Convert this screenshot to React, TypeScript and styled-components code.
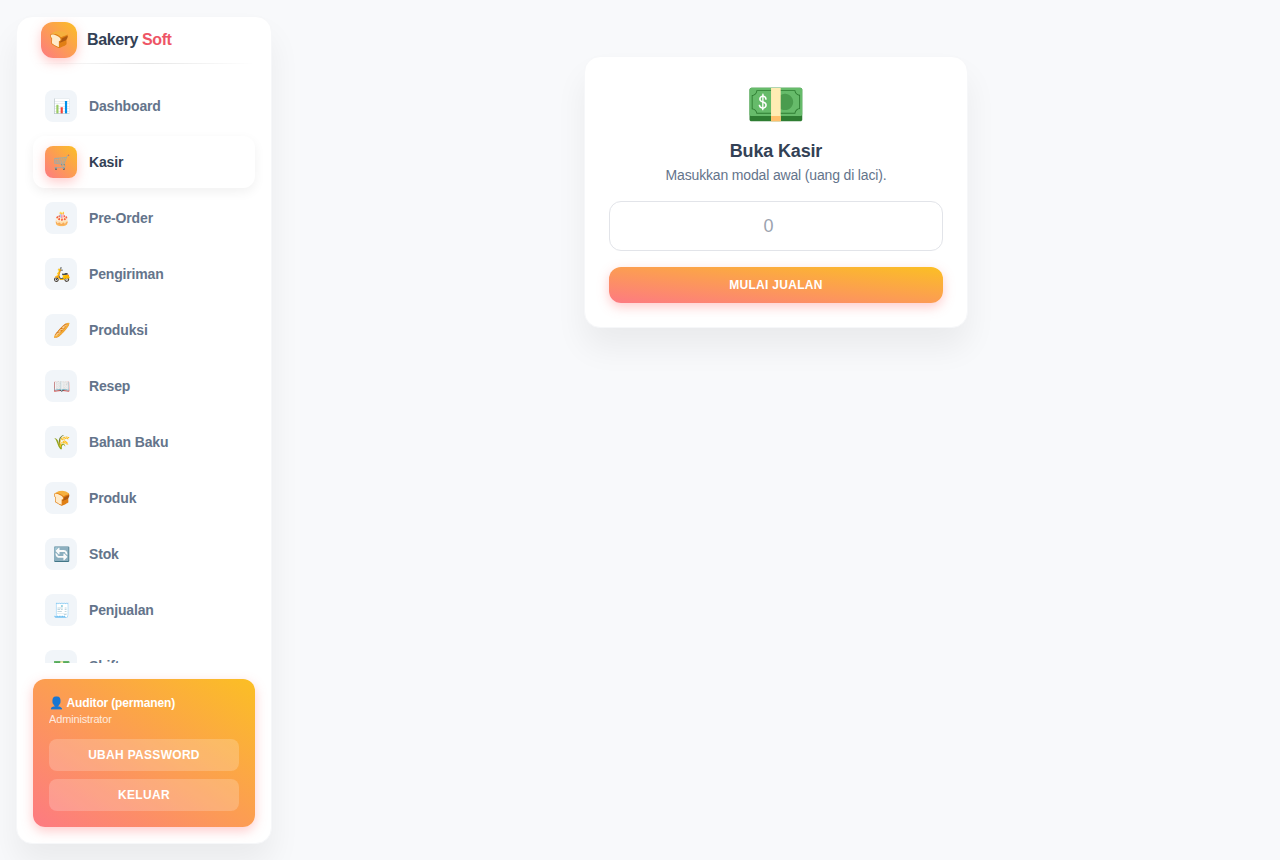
import React from "react";
import styled, { createGlobalStyle, css } from "styled-components";

const sunset = "linear-gradient(to top right, #fd7a82, #fbbf24)";
const glow = "0 4px 12px rgba(255, 107, 107, 0.35)";

const GlobalStyle = createGlobalStyle`
  *, *::before, *::after { box-sizing: border-box; }
  body {
    margin: 0;
    background: #f8f9fb;
    color: #334155;
    font-family: "Liberation Sans", Arial, sans-serif;
    font-size: 16px;
    line-height: 20px;
    letter-spacing: -0.01em;
  }
  h1, p, ul { margin: 0; padding: 0; }
  button, input { font-family: inherit; }
`;

const Page = styled.div`
  display: flex;
  height: 100vh;
  gap: 16px;
  padding: 16px;
  overflow: hidden;
  font-size: 14px;
`;

const panel = css`
  background: #fff;
  border: 1px solid #f6f7f9;
  border-radius: 16px;
  box-shadow: 0 20px 32px 0 rgba(0, 0, 0, 0.06);
`;

const Sidebar = styled.aside`
  ${panel}
  display: flex;
  flex-direction: column;
  flex: 0 0 256px;
  min-height: 0;
  overflow: hidden;
`;

const Brand = styled.a`
  display: flex;
  align-items: center;
  gap: 10px;
  height: 46px;
  flex-shrink: 0;
  padding: 0 24px;
  color: #334155;
  font-size: 16px;
  font-weight: 700;
  letter-spacing: -0.025em;
  text-decoration: none;
`;

const BrandMark = styled.span`
  display: grid;
  place-items: center;
  width: 36px;
  height: 36px;
  border-radius: 12px;
  background: ${sunset};
  box-shadow: ${glow};
`;

const Accent = styled.span`
  color: #ee5566;
`;

const Divider = styled.hr`
  flex-shrink: 0;
  height: 1px;
  margin: 0 16px;
  border: 0;
  background: linear-gradient(to right, transparent, rgba(0, 0, 0, 0.1), transparent);
`;

const Nav = styled.nav`
  flex: 1;
  min-height: 0;
  overflow: hidden;
  padding: 16px 16px 0;
`;

const NavList = styled.ul`
  display: flex;
  flex-direction: column;
  gap: 4px;
  list-style: none;
`;

const NavLink = styled.a<{ $active: boolean }>`
  display: flex;
  align-items: center;
  gap: 12px;
  padding: 10px 12px;
  border-radius: 12px;
  color: ${(p) => (p.$active ? "#334155" : "#64748b")};
  font-weight: 700;
  text-decoration: none;
  box-shadow: ${(p) => (p.$active ? "0 4px 12px rgba(0, 0, 0, 0.06)" : "none")};
`;

const NavIcon = styled.span<{ $active: boolean }>`
  display: grid;
  place-items: center;
  width: 32px;
  height: 32px;
  border-radius: 8px;
  font-weight: 400;
  letter-spacing: normal;
  background: ${(p) => (p.$active ? sunset : "#f1f5f9")};
  box-shadow: ${(p) => (p.$active ? glow : "none")};
`;

const Account = styled.section`
  flex-shrink: 0;
  display: flex;
  flex-direction: column;
  gap: 8px;
  margin: 16px;
  padding: 16px;
  border-radius: 12px;
  background: ${sunset};
  box-shadow: ${glow};
  color: #fff;
`;

const Identity = styled.div`
  padding-bottom: 4px;
`;

const UserName = styled.p`
  font-size: 12px;
  font-weight: 700;
  line-height: 16px;
`;

const UserRole = styled.p`
  font-size: 11px;
  line-height: 16px;
  opacity: 0.8;
`;

const Button = styled.button`
  width: 100%;
  border: 0;
  color: #fff;
  font-size: 12px;
  font-weight: 700;
  line-height: 16px;
  letter-spacing: 0.025em;
  text-transform: uppercase;
  cursor: pointer;
`;

const GhostButton = styled(Button)`
  padding: 8px 12px;
  border-radius: 8px;
  background: rgba(255, 255, 255, 0.2);
`;

const PrimaryButton = styled(Button)`
  padding: 10px 16px;
  border-radius: 12px;
  background: ${sunset};
  box-shadow: ${glow};
`;

const Main = styled.main`
  flex: 1;
  min-width: 0;
  display: flex;
  align-items: flex-start;
  justify-content: center;
  padding-top: 40px;
`;

const Card = styled.form`
  ${panel}
  width: 100%;
  max-width: 384px;
  padding: 24px;
  text-align: center;
`;

const Cash = styled.div`
  margin-bottom: 8px;
  font-size: 48px;
  line-height: 48px;
`;

const Title = styled.h1`
  font-size: 18px;
  font-weight: 700;
  line-height: 28px;
`;

const Hint = styled.label`
  display: block;
  color: #64748b;
`;

const Amount = styled.input`
  display: block;
  width: 100%;
  height: 50px;
  margin: 16px 0;
  padding: 8px 12px;
  border: 1px solid #e2e4e9;
  border-radius: 12px;
  background: #fff;
  color: #334155;
  font-size: 18px;
  line-height: 28px;
  text-align: center;

  &::placeholder {
    color: #9ca3af;
    opacity: 1;
  }
`;

const items = [
  { icon: "📊", label: "Dashboard" },
  { icon: "🛒", label: "Kasir" },
  { icon: "🎂", label: "Pre-Order" },
  { icon: "🛵", label: "Pengiriman" },
  { icon: "🥖", label: "Produksi" },
  { icon: "📖", label: "Resep" },
  { icon: "🌾", label: "Bahan Baku" },
  { icon: "🍞", label: "Produk" },
  { icon: "🔄", label: "Stok" },
  { icon: "🧾", label: "Penjualan" },
  { icon: "💵", label: "Shift" },
];

export default function App() {
  return (
    <>
      <GlobalStyle />
      <Page>
        <Sidebar>
          <Brand href="#">
            <BrandMark aria-hidden="true">🍞</BrandMark>
            <span>
              Bakery <Accent>Soft</Accent>
            </span>
          </Brand>
          <Divider />
          <Nav>
            <NavList>
              {items.map(({ icon, label }) => {
                const active = label === "Kasir";
                return (
                  <li key={label}>
                    <NavLink href="#" $active={active} aria-current={active ? "page" : undefined}>
                      <NavIcon $active={active} aria-hidden="true">{icon}</NavIcon>
                      <span>{label}</span>
                    </NavLink>
                  </li>
                );
              })}
            </NavList>
          </Nav>
          <Account>
            <Identity>
              <UserName>👤 Auditor (permanen)</UserName>
              <UserRole>Administrator</UserRole>
            </Identity>
            <GhostButton type="button">Ubah Password</GhostButton>
            <GhostButton type="button">Keluar</GhostButton>
          </Account>
        </Sidebar>
        <Main>
          <Card onSubmit={(e) => e.preventDefault()}>
            <Cash aria-hidden="true">💵</Cash>
            <Title>Buka Kasir</Title>
            <Hint htmlFor="modal">Masukkan modal awal (uang di laci).</Hint>
            <Amount id="modal" type="number" placeholder="0" />
            <PrimaryButton type="submit">Mulai Jualan</PrimaryButton>
          </Card>
        </Main>
      </Page>
    </>
  );
}
